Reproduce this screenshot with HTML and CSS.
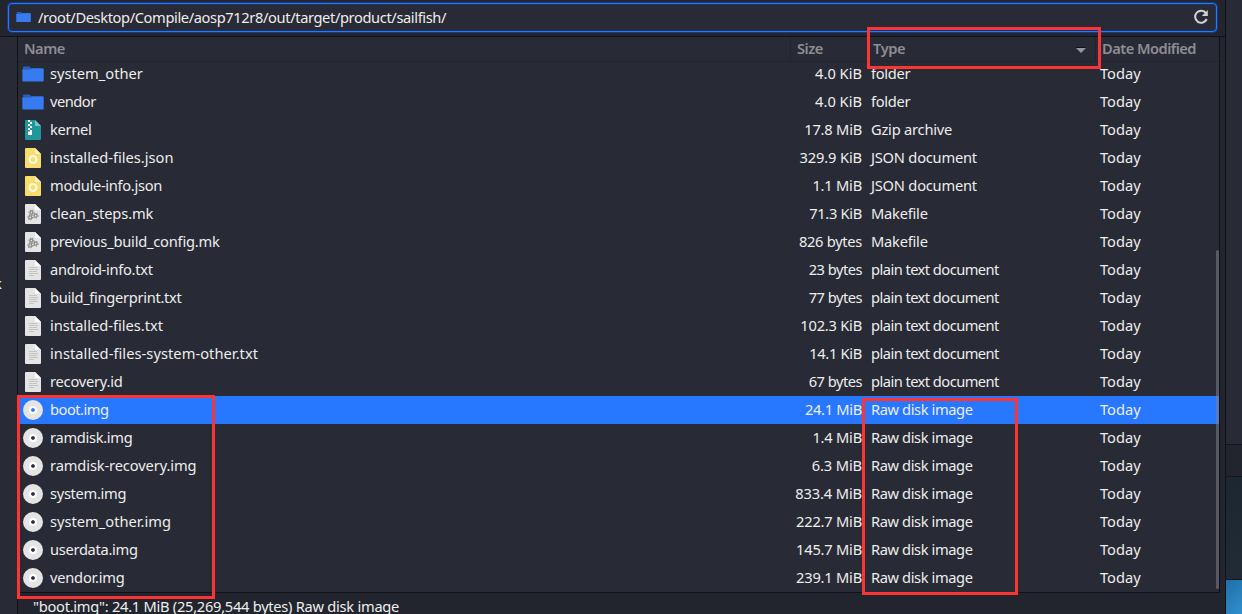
FILE: index.html
```html
<!DOCTYPE html>
<html lang="en">
<head>
<meta charset="utf-8">
<title>sailfish</title>
<link rel="stylesheet" href="styles.css">
</head>
<body>
<svg class="defs" width="0" height="0">
  <symbol id="folder" viewBox="0 0 22 16"><path d="M1 1.2Q1 .5 1.8 .5H7.5L9.5 2.2H20.2Q21 2.2 21 3V8H1Z" fill="#2a5db8"/><path d="M.3 3.5H8.5L10 2.5H21.2Q21.7 2.5 21.7 3V14.6Q21.7 15.5 20.9 15.5H1.2Q.4 15.5 .4 14.6Z" fill="#367bf0"/></symbol>
  <symbol id="zip" viewBox="0 0 16 20"><path d="M1 0H10L16 6V19Q16 20 15 20H1Q0 20 0 19V1Q0 0 1 0Z" fill="#1f979b"/><path d="M10 0L16 6H11Q10 6 10 5Z" fill="#7cc5c6"/><path d="M3 0h2v2H3zM5 2h2v2H5zM3 4h2v2H3zM5 6h2v2H5zM3 8h2v2H3zM5 10h2v2H5z" fill="#fff"/><path d="M3 11.5h4V15H3z" fill="#fff"/></symbol>
  <symbol id="json" viewBox="0 0 16 20"><path d="M1 0H10L16 6V19Q16 20 15 20H1Q0 20 0 19V1Q0 0 1 0Z" fill="#f8dc6c"/><path d="M10 0L16 6H11Q10 6 10 5Z" fill="#fcf0bd"/><circle cx="8" cy="11.5" r="3.5" fill="none" stroke="#fffbe6" stroke-width="2.1"/></symbol>
  <symbol id="page" viewBox="0 0 16 20"><path d="M1 0H10L16 6V19Q16 20 15 20H1Q0 20 0 19V1Q0 0 1 0Z" fill="#e4e4e4"/><path d="M10 0L16 6H11Q10 6 10 5Z" fill="#fff"/></symbol>
  <symbol id="text" viewBox="0 0 16 20"><use href="#page"/><path d="M4 7.5h8M4 9.5h9M4 11.5h8M4 13.5h9M4 15.5h5" stroke="#c4c4c4"/></symbol>
  <symbol id="make" viewBox="0 0 16 20"><use href="#page"/><g fill="none" stroke="#8c8c8c"><g stroke-width="1.3"><circle cx="6.4" cy="8.5" r="1.5"/><circle cx="5.3" cy="13.4" r="1.5"/><circle cx="10.6" cy="11.7" r="1.5"/></g><g stroke-width="1.1" stroke-dasharray="1 1.2"><circle cx="6.4" cy="8.5" r="2.4"/><circle cx="5.3" cy="13.4" r="2.4"/><circle cx="10.6" cy="11.7" r="2.4"/></g></g></symbol>
  <symbol id="disk" viewBox="0 0 20 20"><circle cx="10" cy="10" r="6" fill="none" stroke="#e4e4e4" stroke-width="8"/><circle cx="10" cy="10" r="3.1" fill="none" stroke="#fff" stroke-width="2"/></symbol>
</svg>
<div class="desktop">
  <div class="window">
    <div class="toolbar">
      <div class="pathbar">
        <svg class="path-icon"><use href="#folder"/></svg>
        <span class="path">/root/Desktop/Compile/aosp712r8/out/target/product/sailfish/</span>
        <svg class="reload" viewBox="0 0 16 16"><path d="M13 4.2A6 6 0 1 0 13.7 10" fill="none" stroke="#d0d0d0" stroke-width="2.1"/><path d="M14.8 1V7H8.8Z" fill="#d0d0d0"/></svg>
      </div>
    </div>
    <div class="content">
      <div class="sidebar"><span class="side-text">k</span></div>
      <div class="main">
        <div class="files">
          <div class="header"><span>Name</span><span>Size</span><span class="h-type">Type<svg class="sort" viewBox="0 0 10 6"><path d="M0 .5H10" stroke="#111318"/><path d="M0 1H10L5 6Z" fill="#96979b"/></svg></span><span class="h-date">Date Modified</span></div>
          <div class="rows">
            <div class="row"><svg class="ic wide"><use href="#folder"/></svg><span>system_other</span><span class="size">4.0 KiB</span><span class="t3">folder</span><span>Today</span></div>
            <div class="row"><svg class="ic wide"><use href="#folder"/></svg><span class="t5">vendor</span><span class="size">4.0 KiB</span><span class="t3">folder</span><span>Today</span></div>
            <div class="row"><svg class="ic"><use href="#zip"/></svg><span class="t3">kernel</span><span class="size t2">17.8 MiB</span><span class="t2">Gzip archive</span><span>Today</span></div>
            <div class="row"><svg class="ic"><use href="#json"/></svg><span>installed-files.json</span><span class="size t1">329.9 KiB</span><span class="t2">JSON document</span><span>Today</span></div>
            <div class="row"><svg class="ic"><use href="#json"/></svg><span class="t3">module-info.json</span><span class="size t2">1.1 MiB</span><span class="t2">JSON document</span><span>Today</span></div>
            <div class="row"><svg class="ic"><use href="#make"/></svg><span class="t1">clean_steps.mk</span><span class="size t3">71.3 KiB</span><span class="t2">Makefile</span><span>Today</span></div>
            <div class="row"><svg class="ic"><use href="#make"/></svg><span class="t2">previous_build_config.mk</span><span class="size t3">826 bytes</span><span class="t2">Makefile</span><span>Today</span></div>
            <div class="row"><svg class="ic"><use href="#text"/></svg><span class="t3">android-info.txt</span><span class="size t5">23 bytes</span><span class="plain">plain text document</span><span>Today</span></div>
            <div class="row"><svg class="ic"><use href="#text"/></svg><span class="t3">build_fingerprint.txt</span><span class="size t5">77 bytes</span><span class="plain">plain text document</span><span>Today</span></div>
            <div class="row"><svg class="ic"><use href="#text"/></svg><span>installed-files.txt</span><span class="size t2">102.3 KiB</span><span class="plain">plain text document</span><span>Today</span></div>
            <div class="row"><svg class="ic"><use href="#text"/></svg><span class="loose">installed-files-system-other.txt</span><span class="size t3">14.1 KiB</span><span class="plain">plain text document</span><span>Today</span></div>
            <div class="row"><svg class="ic"><use href="#text"/></svg><span class="t2">recovery.id</span><span class="size t5">67 bytes</span><span class="plain">plain text document</span><span>Today</span></div>
            <div class="row selected"><svg class="ic disk"><use href="#disk"/></svg><span class="t5">boot.img</span><span class="size t3">24.1 MiB</span><span class="raw">Raw disk image</span><span>Today</span></div>
            <div class="row"><svg class="ic disk"><use href="#disk"/></svg><span class="t3">ramdisk.img</span><span class="size t2">1.4 MiB</span><span class="raw">Raw disk image</span><span>Today</span></div>
            <div class="row"><svg class="ic disk"><use href="#disk"/></svg><span class="t1">ramdisk-recovery.img</span><span class="size t1">6.3 MiB</span><span class="raw">Raw disk image</span><span>Today</span></div>
            <div class="row"><svg class="ic disk"><use href="#disk"/></svg><span class="t3">system.img</span><span class="size t1">833.4 MiB</span><span class="raw">Raw disk image</span><span>Today</span></div>
            <div class="row"><svg class="ic disk"><use href="#disk"/></svg><span>system_other.img</span><span class="size t2">222.7 MiB</span><span class="raw">Raw disk image</span><span>Today</span></div>
            <div class="row"><svg class="ic disk"><use href="#disk"/></svg><span class="t3">userdata.img</span><span class="size t2">145.7 MiB</span><span class="raw">Raw disk image</span><span>Today</span></div>
            <div class="row"><svg class="ic disk"><use href="#disk"/></svg><span class="t2">vendor.img</span><span class="size t2">239.1 MiB</span><span class="raw">Raw disk image</span><span>Today</span></div>
          </div>
          <div class="scrollbar"></div>
        </div>
        <div class="status">"boot.img": 24.1 MiB (25,269,544 bytes) Raw disk image</div>
      </div>
    </div>
  </div>
  <div class="behind"><div class="b-top"></div><div class="b-bar"></div><div class="b-dark"></div><div class="b-blue"></div></div>
  <div class="mark mark-type"></div>
  <div class="mark mark-names"></div>
  <div class="mark mark-kinds"></div>
</div>
</body>
</html>
```
FILE: styles.css
```css
* { box-sizing: border-box; }
body { margin: 0; background: #23252e; color: #eeeeec; font: 14.67px/28px "Noto Sans", sans-serif; overflow: hidden; }
.defs { position: absolute; }
.desktop { position: relative; display: flex; width: 1242px; height: 614px; overflow: hidden; white-space: nowrap; }
.window { display: flex; flex-direction: column; width: 1226px; background: #23252e; border-right: 1px solid #101218; }
.toolbar { height: 36px; padding: 3px 8px 4px; }
.pathbar { display: flex; align-items: center; height: 29px; padding: 0 7px 0 7px; border: 1px solid #2777ff; border-radius: 4px; background: #282a35; box-shadow: 0 0 0 1px #173a7d, inset 0 0 0 1px #1d3462; }
.path-icon { width: 15px; height: 12px; margin-bottom: 1px; }
.path { margin-left: 7px; flex: 1; letter-spacing: -.385px; line-height: 27px; }
.reload { width: 16px; height: 16px; margin-bottom: 1px; }
.content { display: flex; height: 578px; border-top: 1px solid #101218; }
.sidebar { width: 18px; background: #282a35; border-right: 1px solid #101218; overflow: hidden; display: flex; align-items: center; padding-bottom: 85px; }
.side-text { margin-left: -6px; }
.main { width: 1207px; }
.files { position: relative; width: 1202px; height: 556px; background: #282a35; border-right: 1px solid #101218; border-bottom: 1px solid #101218; }
.header { display: grid; grid-template-columns: 773px 78px 227px 123px; height: 25px; margin-bottom: -2px; border-bottom: 1px solid #23252e; line-height: 22px; color: #8d8e92; font-weight: 600; letter-spacing: -.5px; }
.header span { display: flex; align-items: flex-start; padding-left: 6px; border-right: 1px solid #23252e; }
.header span:last-child { border: 0; }
.header .h-type { padding-left: 4px; letter-spacing: -.4px; }
.header .h-date { letter-spacing: -.54px; }
.sort { width: 10px; height: 6px; margin: 10px 9px 0 auto; }
.row { display: grid; grid-template-columns: 32px 732px 80px 9px 229px 119px; height: 28px; line-height: 26px; align-items: start; }
.row span:nth-child(4) { grid-column: 5; }
.size { text-align: right; }
.ic { width: 16px; height: 20px; margin-left: 7px; align-self: center; }
.ic.wide { width: 22px; height: 16px; margin-left: 4px; }
.ic.disk { width: 20px; margin-left: 5px; }
.selected { background: #2777ff; }
.loose { letter-spacing: .05px; }
.t1 { letter-spacing: -.12px; }
.t2 { letter-spacing: -.22px; }
.t3 { letter-spacing: -.3px; }
.t5 { letter-spacing: -.5px; }
.raw { letter-spacing: -.4px; }
.plain { letter-spacing: -.54px; }
.scrollbar { position: absolute; right: 0; top: 213px; width: 3px; height: 339px; border-radius: 2px; background: rgba(126, 128, 139, .55); }
.status { padding-left: 15px; line-height: 27px; height: 22px; letter-spacing: -.27px; }
.behind { display: flex; flex-direction: column; width: 16px; }
.b-top { height: 445px; background: #282a35; border-bottom: 1px solid #14161c; }
.b-bar { height: 32px; background: #23252e; border-bottom: 1px solid #14161c; }
.b-dark { height: 103px; background: linear-gradient(#1d2731, #202b36); border-bottom: 1px solid #14161c; }
.b-blue { flex: 1; background: linear-gradient(135deg, #206fa6, #308fce); }
.mark { position: absolute; border: 3px solid #fc3434; }
.mark-type { left: 867px; top: 27px; width: 234px; height: 42px; }
.mark-names { left: 17px; top: 395px; width: 198px; height: 204px; }
.mark-kinds { left: 862px; top: 398px; width: 156px; height: 197px; }
```
